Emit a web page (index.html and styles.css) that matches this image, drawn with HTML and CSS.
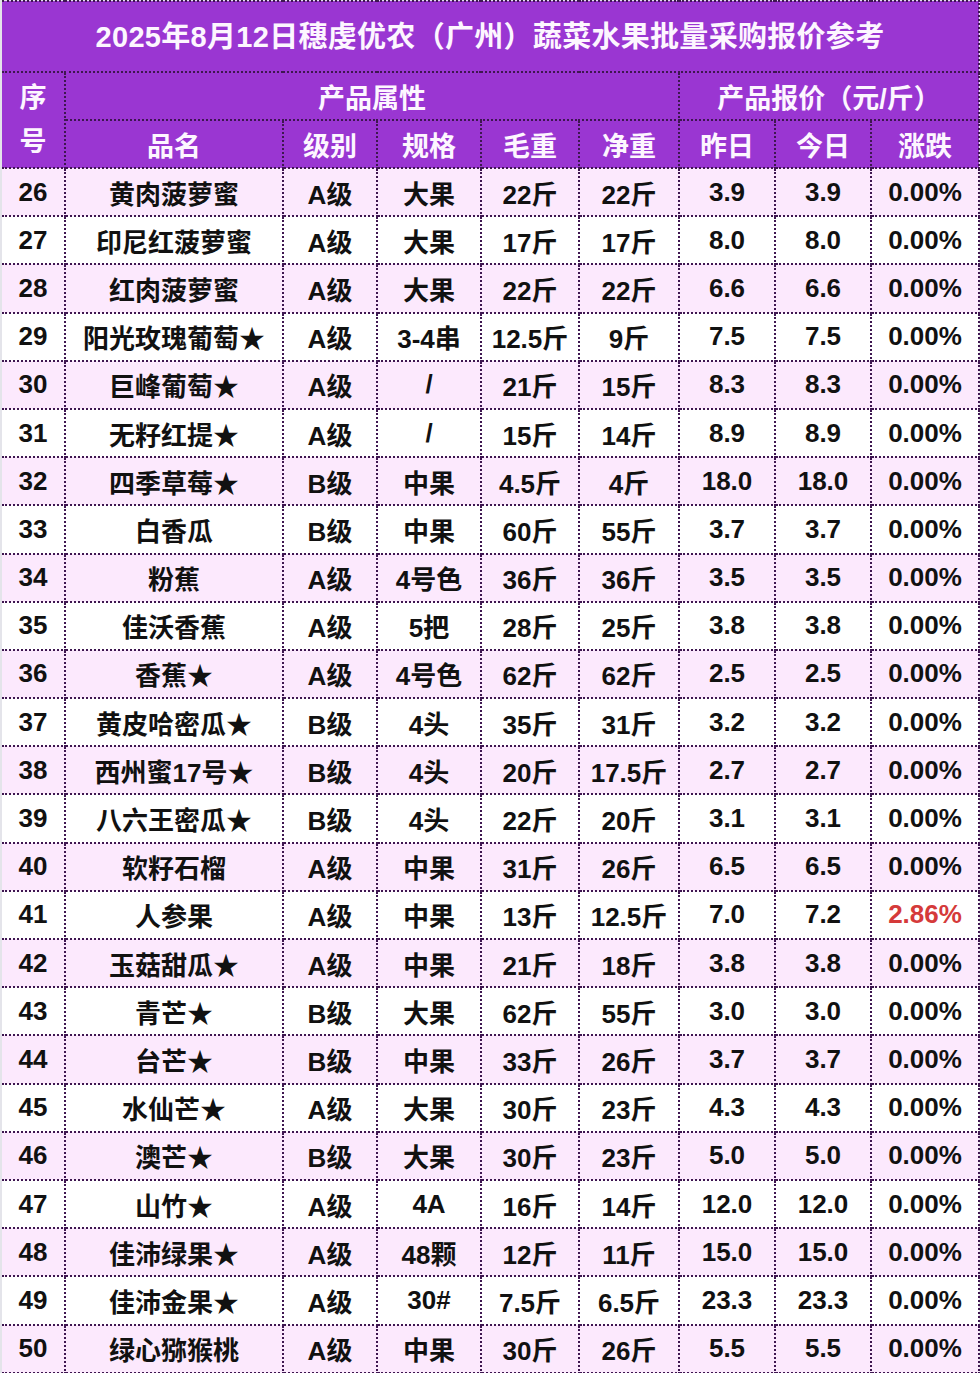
FILE: index.html
```html
<!DOCTYPE html>
<html lang="zh-CN">
<head>
<meta charset="utf-8">
<title>报价参考</title>
<link rel="stylesheet" href="styles.css">
</head>
<body>
<div class="page">
<table class="price">
<colgroup>
<col class="c-no"><col class="c-name"><col class="c-grade"><col class="c-spec"><col class="c-gw"><col class="c-nw"><col class="c-y"><col class="c-t"><col class="c-chg">
</colgroup>
<thead>
<tr class="title-row"><th colspan="9">2025年8月12日穗虔优农（广州）蔬菜水果批量采购报价参考</th></tr>
<tr class="head-row"><th rowspan="2" class="no-head">序<br>号</th><th colspan="5">产品属性</th><th colspan="3">产品报价（元/斤）</th></tr>
<tr class="head-row"><th>品名</th><th>级别</th><th>规格</th><th>毛重</th><th>净重</th><th>昨日</th><th>今日</th><th>涨跌</th></tr>
</thead>
<tbody>
<tr><td>26</td><td>黄肉菠萝蜜</td><td>A级</td><td>大果</td><td>22斤</td><td>22斤</td><td>3.9</td><td>3.9</td><td>0.00%</td></tr>
<tr><td>27</td><td>印尼红菠萝蜜</td><td>A级</td><td>大果</td><td>17斤</td><td>17斤</td><td>8.0</td><td>8.0</td><td>0.00%</td></tr>
<tr><td>28</td><td>红肉菠萝蜜</td><td>A级</td><td>大果</td><td>22斤</td><td>22斤</td><td>6.6</td><td>6.6</td><td>0.00%</td></tr>
<tr><td>29</td><td>阳光玫瑰葡萄★</td><td>A级</td><td>3-4串</td><td>12.5斤</td><td>9斤</td><td>7.5</td><td>7.5</td><td>0.00%</td></tr>
<tr><td>30</td><td>巨峰葡萄★</td><td>A级</td><td>/</td><td>21斤</td><td>15斤</td><td>8.3</td><td>8.3</td><td>0.00%</td></tr>
<tr><td>31</td><td>无籽红提★</td><td>A级</td><td>/</td><td>15斤</td><td>14斤</td><td>8.9</td><td>8.9</td><td>0.00%</td></tr>
<tr><td>32</td><td>四季草莓★</td><td>B级</td><td>中果</td><td>4.5斤</td><td>4斤</td><td>18.0</td><td>18.0</td><td>0.00%</td></tr>
<tr><td>33</td><td>白香瓜</td><td>B级</td><td>中果</td><td>60斤</td><td>55斤</td><td>3.7</td><td>3.7</td><td>0.00%</td></tr>
<tr><td>34</td><td>粉蕉</td><td>A级</td><td>4号色</td><td>36斤</td><td>36斤</td><td>3.5</td><td>3.5</td><td>0.00%</td></tr>
<tr><td>35</td><td>佳沃香蕉</td><td>A级</td><td>5把</td><td>28斤</td><td>25斤</td><td>3.8</td><td>3.8</td><td>0.00%</td></tr>
<tr><td>36</td><td>香蕉★</td><td>A级</td><td>4号色</td><td>62斤</td><td>62斤</td><td>2.5</td><td>2.5</td><td>0.00%</td></tr>
<tr><td>37</td><td>黄皮哈密瓜★</td><td>B级</td><td>4头</td><td>35斤</td><td>31斤</td><td>3.2</td><td>3.2</td><td>0.00%</td></tr>
<tr><td>38</td><td>西州蜜17号★</td><td>B级</td><td>4头</td><td>20斤</td><td>17.5斤</td><td>2.7</td><td>2.7</td><td>0.00%</td></tr>
<tr><td>39</td><td>八六王密瓜★</td><td>B级</td><td>4头</td><td>22斤</td><td>20斤</td><td>3.1</td><td>3.1</td><td>0.00%</td></tr>
<tr><td>40</td><td>软籽石榴</td><td>A级</td><td>中果</td><td>31斤</td><td>26斤</td><td>6.5</td><td>6.5</td><td>0.00%</td></tr>
<tr><td>41</td><td>人参果</td><td>A级</td><td>中果</td><td>13斤</td><td>12.5斤</td><td>7.0</td><td>7.2</td><td class="up">2.86%</td></tr>
<tr><td>42</td><td>玉菇甜瓜★</td><td>A级</td><td>中果</td><td>21斤</td><td>18斤</td><td>3.8</td><td>3.8</td><td>0.00%</td></tr>
<tr><td>43</td><td>青芒★</td><td>B级</td><td>大果</td><td>62斤</td><td>55斤</td><td>3.0</td><td>3.0</td><td>0.00%</td></tr>
<tr><td>44</td><td>台芒★</td><td>B级</td><td>中果</td><td>33斤</td><td>26斤</td><td>3.7</td><td>3.7</td><td>0.00%</td></tr>
<tr><td>45</td><td>水仙芒★</td><td>A级</td><td>大果</td><td>30斤</td><td>23斤</td><td>4.3</td><td>4.3</td><td>0.00%</td></tr>
<tr><td>46</td><td>澳芒★</td><td>B级</td><td>大果</td><td>30斤</td><td>23斤</td><td>5.0</td><td>5.0</td><td>0.00%</td></tr>
<tr><td>47</td><td>山竹★</td><td>A级</td><td>4A</td><td>16斤</td><td>14斤</td><td>12.0</td><td>12.0</td><td>0.00%</td></tr>
<tr><td>48</td><td>佳沛绿果★</td><td>A级</td><td>48颗</td><td>12斤</td><td>11斤</td><td>15.0</td><td>15.0</td><td>0.00%</td></tr>
<tr><td>49</td><td>佳沛金果★</td><td>A级</td><td>30#</td><td>7.5斤</td><td>6.5斤</td><td>23.3</td><td>23.3</td><td>0.00%</td></tr>
<tr><td>50</td><td>绿心猕猴桃</td><td>A级</td><td>中果</td><td>30斤</td><td>26斤</td><td>5.5</td><td>5.5</td><td>0.00%</td></tr>
</tbody>
</table>
</div>
</body>
</html>
```
FILE: styles.css
```css
html, body {
  margin: 0;
  padding: 0;
  background: #e4e4ea;
}
.page {
  padding-left: 2px;
  width: 978px;
  height: 1373px;
  overflow: hidden;
}
.price {
  border-collapse: collapse;
  table-layout: fixed;
  width: 977px;
  font-family: "Liberation Sans", "Noto Sans CJK SC", sans-serif;
  font-weight: bold;
  color: #111;
}
.c-no { width: 63px; }
.c-name { width: 218px; }
.c-grade { width: 94px; }
.c-spec { width: 104px; }
.c-gw { width: 98px; }
.c-nw { width: 100px; }
.c-y { width: 96px; }
.c-t { width: 96px; }
.c-chg { width: 108px; }
.price th, .price td {
  border: 2px dotted #3e1650;
  padding: 0;
  text-align: center;
  vertical-align: middle;
  white-space: nowrap;
}
.price th:first-child, .price td:first-child { border-left: none; }
.price thead th {
  background: #9a36d2;
  color: #fdf6ff;
}
.title-row th {
  height: 69px;
  font-size: 29px;
  letter-spacing: 0.3px;
  line-height: 64px;
}
.head-row th {
  height: 46px;
  font-size: 27px;
}
.no-head {
  line-height: 44px;
}
.price td {
  height: 46.2px;
  font-size: 26px;
  background: #ffffff;
}
.price tbody tr:nth-child(odd) td {
  background: #fce9fd;
}
.price td.up {
  color: #d53a3a;
}
```
